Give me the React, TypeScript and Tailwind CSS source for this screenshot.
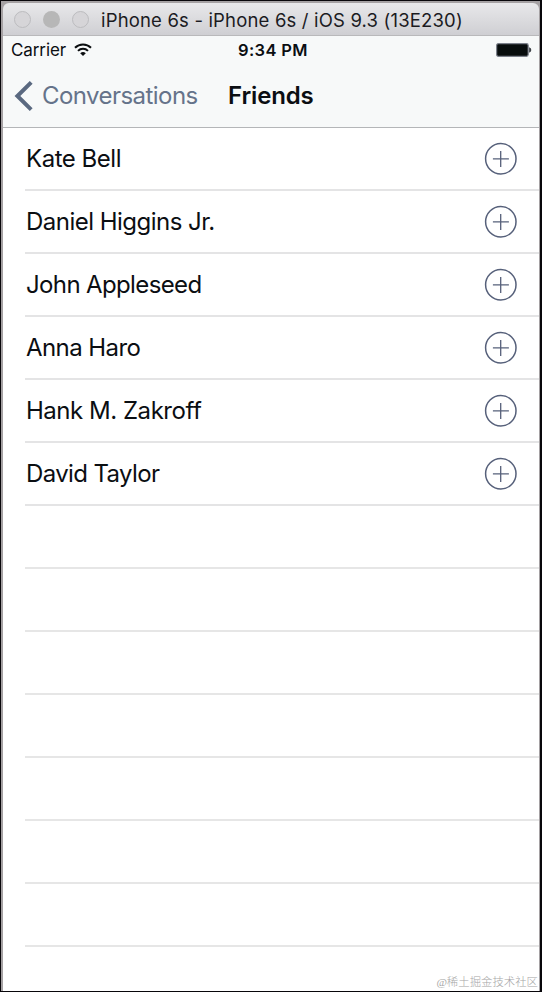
const friends = [
  { name: "Kate Bell", spacing: "tracking-[-0.48px]" },
  { name: "Daniel Higgins Jr.", spacing: "tracking-[-0.52px]" },
  { name: "John Appleseed", spacing: "tracking-[-0.63px]" },
  { name: "Anna Haro", spacing: "tracking-[-0.57px]" },
  { name: "Hank M. Zakroff", spacing: "tracking-[-0.47px]" },
  { name: "David Taylor", spacing: "tracking-[-0.62px]" },
];

function TitleBar() {
  return (
    <div className="flex h-[33px] shrink-0 items-center rounded-t-[6px] border-b border-[#b9b9bb] bg-linear-to-b from-[#e8e8ea] to-[#cfcfd3] pt-px pl-[11px]">
      <div className="flex gap-[12px]">
        <span className="size-[17px] rounded-full border border-[#bcbcbf] bg-[#d6d5d8]" />
        <span className="size-[17px] rounded-full bg-[#b7b7b7]" />
        <span className="size-[17px] rounded-full border border-[#bcbcbf] bg-[#d6d5d8]" />
      </div>
      <span className="ml-[12px] pt-px text-[18.5px] leading-[22px] tracking-[0.17px] whitespace-nowrap text-[#1b1b1f]">
        iPhone 6s - iPhone 6s / iOS 9.3 (13E230)
      </span>
    </div>
  );
}

function StatusBar() {
  return (
    <div className="grid h-[28px] grid-cols-3 items-center pr-[7px] pl-[8px]">
      <div className="flex items-center gap-[8px]">
        <span className="text-[17px] leading-[20px] tracking-[-0.1px]">Carrier</span>
        <svg width="18" height="14" viewBox="0 0 18 14" fill="none" stroke="#0b0e10" strokeWidth="2">
          <path d="M1 4.7a11.3 11.3 0 0 1 16 0" />
          <path d="M4 7.9a7.1 7.1 0 0 1 10 0" />
          <path d="M9 13.1 6.2 10.3a4 4 0 0 1 5.6 0z" fill="#0b0e10" stroke="none" />
        </svg>
      </div>
      <span className="pl-[3px] text-center text-[16.5px] leading-[20px] font-semibold tracking-[0.35px] whitespace-nowrap">
        9:34 PM
      </span>
      <svg className="justify-self-end" width="36" height="14" viewBox="0 0 36 14">
        <rect x="0.6" y="0.6" width="31.6" height="12.8" rx="1.8" fill="#080d0d" stroke="#7c818b" strokeWidth="1.2" />
        <path d="M33.6 4.8c1.6.5 1.6 3.9 0 4.4z" fill="#30343b" stroke="#30343b" strokeWidth=".8" />
      </svg>
    </div>
  );
}

function NavBar() {
  return (
    <div className="flex h-[63px] items-center pl-[10px]">
      <svg width="20" height="30" viewBox="0 0 20 30" fill="none" stroke="#5a6980" strokeWidth="4">
        <path d="M18.2 1.4 4.4 15l13.8 13.6" />
      </svg>
      <span className="ml-[9px] w-[186px] text-[24px] leading-[30px] tracking-[-0.55px] whitespace-nowrap text-[#65738a]">
        Conversations
      </span>
      <h1 className="text-[24px] leading-[30px] font-semibold tracking-[-0.15px]">Friends</h1>
    </div>
  );
}

function AddIcon() {
  return (
    <svg width="34" height="34" viewBox="0 0 34 34" fill="none" stroke="#56607a">
      <circle cx="16.8" cy="16.8" r="15.2" strokeWidth="1.5" />
      <path d="M16.7 9v16M8.9 16.8h16" strokeWidth="1.3" />
    </svg>
  );
}

export default function App() {
  return (
    <div className="h-[992px] w-[542px] overflow-hidden border border-r-2 border-[#08060a] bg-[#a5a1a3] font-['Inter',sans-serif] text-[#0b0e12]">
      <div className="relative flex h-[990px] flex-col pt-[2px] pr-px pl-[2px]">
        <TitleBar />
        <header className="h-[92px] shrink-0 border-b border-[#b4b6b8] bg-[#f7f9f9]">
          <StatusBar />
          <NavBar />
        </header>
        <ul className="min-h-0 flex-1 overflow-hidden bg-white pl-[22px]">
          {friends.map((f) => (
            <li
              key={f.name}
              className="flex h-[63px] items-center justify-between border-b-2 border-[#e4e4e5] pr-[21px] pl-px"
            >
              <span className={"text-[24px] leading-[30px] whitespace-nowrap " + f.spacing}>{f.name}</span>
              <AddIcon />
            </li>
          ))}
          {Array.from({ length: 7 }, (_, i) => (
            <li key={i} className="h-[63px] border-b-2 border-[#e6e6e6]" />
          ))}
        </ul>
        <span className="absolute right-[2px] bottom-0 font-['Liberation_Serif','Noto_Sans_CJK_SC',sans-serif] text-[11.4px] leading-[18px] font-light whitespace-nowrap text-[#a6a6a6]">
          @稀土掘金技术社区
        </span>
      </div>
    </div>
  );
}
